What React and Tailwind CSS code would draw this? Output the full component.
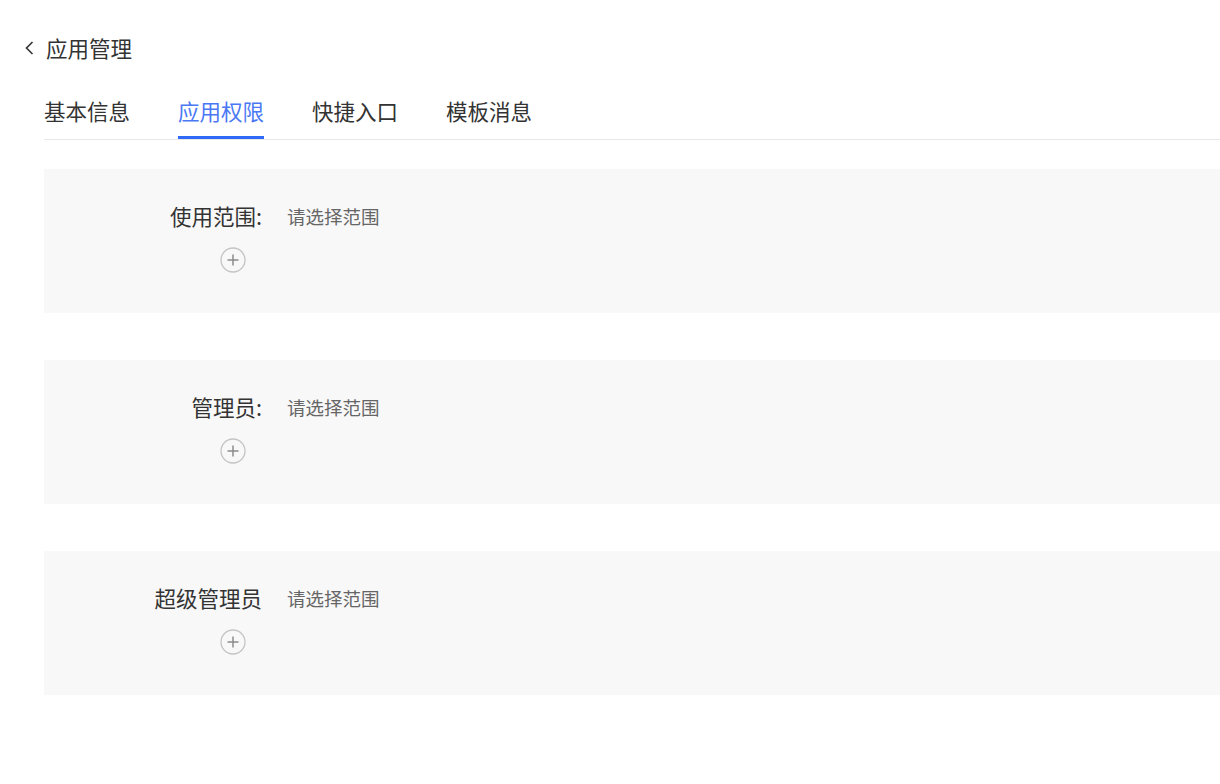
import React from 'react';

const tabs = ['基本信息', '应用权限', '快捷入口', '模板消息'];

const sections = [
  { label: '使用范围:' },
  { label: '管理员:' },
  { label: '超级管理员' },
];

const PlusCircle = () => (
  <svg width="26" height="26" viewBox="0 0 26 26" fill="none">
    <circle cx="13" cy="13" r="12" stroke="#c4c4c4" strokeWidth="1.3" />
    <path d="M13 7.5v11M7.5 13h11" stroke="#8a8a8a" strokeWidth="1.5" />
  </svg>
);

const App = () => {
  return (
    <div
      className="min-h-screen bg-white pt-[30px] text-[#333]"
      style={{ fontFamily: '"Noto Sans CJK SC", "Noto Sans", sans-serif' }}
    >
      <div className="flex h-[36px] items-center pl-[24px]">
        <svg width="11" height="18" viewBox="0 0 11 18" fill="none">
          <path d="M8.5 3L2.5 9l6 6" stroke="#333" strokeWidth="1.6" />
        </svg>
        <span className="ml-[11px] text-[21.5px] leading-[36px]">应用管理</span>
      </div>

      <div className="mt-[30px] ml-[44px] flex gap-[48px] border-b border-[#e8e8e8]">
        {tabs.map((t, i) => (
          <div key={t} className="flex flex-col">
            <span className={`text-[21.5px] leading-[30px] ${i === 1 ? 'text-[#4a78f5]' : 'text-[#333]'}`}>{t}</span>
            <div className={`mt-[10px] h-[3px] ${i === 1 ? 'bg-[#2e6af5]' : 'bg-transparent'}`} />
          </div>
        ))}
      </div>

      <div className="ml-[44px] mt-[29px] flex flex-col gap-[47px]">
        {sections.map((s) => (
          <div key={s.label} className="h-[144px] bg-[#f8f8f8] pt-[33px]">
            <div className="flex items-center">
              <span className="w-[218px] text-right text-[21.5px] leading-[28px] text-[#333]">{s.label}</span>
              <span className="ml-[25px] text-[18.5px] leading-[28px] text-[#666]">请选择范围</span>
            </div>
            <div className="ml-[176px] mt-[17px]">
              <PlusCircle />
            </div>
          </div>
        ))}
      </div>
    </div>
  );
};

export default App;
